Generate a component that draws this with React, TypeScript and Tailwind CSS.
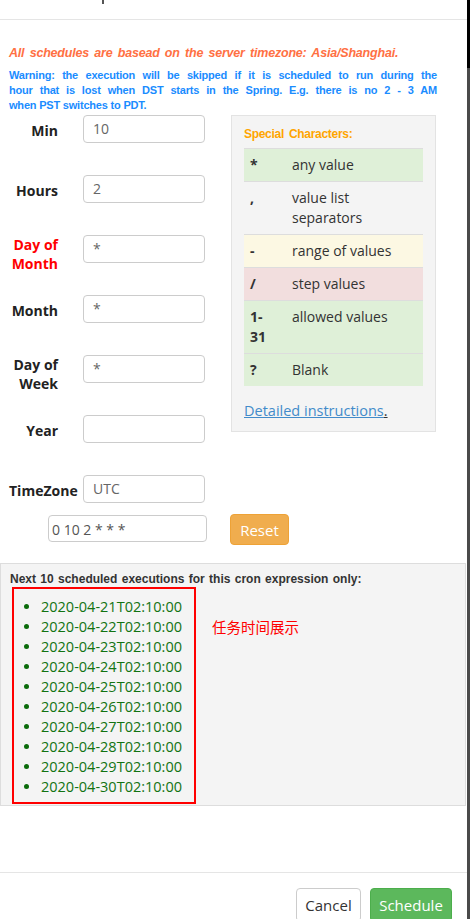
import React from 'react';

const fields = [
  { label: ['Min'], value: '10', red: false },
  { label: ['Hours'], value: '2', red: false },
  { label: ['Day of', 'Month'], value: '*', red: true },
  { label: ['Month'], value: '*', red: false },
  { label: ['Day of', 'Week'], value: '*', red: false },
  { label: ['Year'], value: '', red: false },
];

const specials = [
  { ch: '*', desc: 'any value', bg: 'bg-[#dff0d8]' },
  { ch: ',', desc: 'value list separators', bg: 'bg-transparent' },
  { ch: '-', desc: 'range of values', bg: 'bg-[#fcf8e3]' },
  { ch: '/', desc: 'step values', bg: 'bg-[#f2dede]' },
  { ch: '1-31', desc: 'allowed values', bg: 'bg-[#dff0d8]' },
  { ch: '?', desc: 'Blank', bg: 'bg-[#dff0d8]' },
];

const runs = [
  '2020-04-21T02:10:00',
  '2020-04-22T02:10:00',
  '2020-04-23T02:10:00',
  '2020-04-24T02:10:00',
  '2020-04-25T02:10:00',
  '2020-04-26T02:10:00',
  '2020-04-27T02:10:00',
  '2020-04-28T02:10:00',
  '2020-04-29T02:10:00',
  '2020-04-30T02:10:00',
];

const warning = [
  'Warning: the execution will be skipped if it is scheduled to run during the',
  'hour that is lost when DST starts in the Spring. E.g. there is no 2 - 3 AM',
];

const narrow = "font-['Liberation_Sans',Arial,sans-serif]";

export default function App() {
  return (
    <div className="flex w-[470px] h-[919px] overflow-hidden bg-white font-['Open_Sans','Noto_Sans_CJK_SC',sans-serif] text-[#333]">
      <div className="flex-1 flex flex-col min-w-0 overflow-hidden">
        {/* clipped modal header */}
        <div className="shrink-0 h-[20px] border-b border-[#e5e5e5] pl-[102px]">
          <div className="w-[2px] h-[4px] bg-[#555]" />
        </div>

        <div className="shrink-0 px-[9px] pt-[25px]">
          <p className={`${narrow} font-bold italic text-[12.5px] leading-[16px] text-[#ff7043] tracking-[-0.2px] [word-spacing:2px] whitespace-nowrap`}>
            All schedules are basead on the server timezone: Asia/Shanghai.
          </p>
          <div className={`${narrow} mt-[7px] font-bold text-[11px] leading-[15px] text-[#1a8cff] pr-[21px] tracking-[-0.2px]`}>
            {warning.map((line) => (
              <div key={line} className="text-justify [text-align-last:justify] whitespace-nowrap">
                {line}
              </div>
            ))}
            <div>when PST switches to PDT.</div>
          </div>
        </div>

        <div className="shrink-0 flex pt-[2px]">
          {/* form */}
          <div className="w-[231px] shrink-0">
            {fields.map((f) => (
              <div key={f.label.join(' ')} className="flex h-[60px]">
                <div
                  className={`w-[58px] text-right font-bold text-[14px] leading-[19px] ${
                    f.label.length > 1 ? 'pt-[0px]' : 'pt-[6px]'
                  } ${f.red ? 'text-[#ff0000]' : 'text-[#222]'}`}
                >
                  {f.label.map((l) => (
                    <div key={l}>{l}</div>
                  ))}
                </div>
                <div className="ml-[25px] w-[122px] h-[28px] border border-[#ccc] rounded-[4px] px-[9px] text-[14px] leading-[26px] text-[#666]">
                  {f.value}
                </div>
              </div>
            ))}
            <div className="flex h-[40px]">
              <div className="pl-[9px] w-[83px] font-bold text-[14px] leading-[19px] pt-[6px] text-[#222]">TimeZone</div>
              <div className="w-[122px] h-[28px] border border-[#ccc] rounded-[4px] px-[9px] text-[14px] leading-[26px] text-[#666]">
                UTC
              </div>
            </div>
          </div>

          {/* special characters panel */}
          <div className="w-[205px] h-[317px] bg-[#f4f4f4] border border-[#e3e3e3] px-[12px]">
            <div className={`${narrow} font-bold text-[12px] leading-[16px] text-[#ffa500] pt-[10px] pb-[6px] tracking-[-0.3px] [word-spacing:2px]`}>
              Special Characters:
            </div>
            <div className="text-[14px] leading-[20px] text-[#333]">
              {specials.map((s) => (
                <div key={s.ch} className={`flex border-t border-[#ddd] ${s.bg} py-[6px]`}>
                  <div className="w-[48px] pl-[6px] pr-[14px] font-bold">{s.ch}</div>
                  <div className="flex-1 pr-[6px]">{s.desc}</div>
                </div>
              ))}
            </div>
            <div className="mt-[15px] text-[14.5px] leading-[20px]">
              <span className="text-[#428bca] underline">Detailed instructions</span>
              <span className="underline">.</span>
            </div>
          </div>
        </div>

        {/* expression + reset */}
        <div className="shrink-0 flex items-start pl-[48px]">
          <div className="w-[159px] h-[27px] border border-[#ccc] rounded-[4px] pl-[3px] text-[14px] leading-[27px] text-[#555]">
            0 10 2 * * *
          </div>
          <button className="ml-[23px] -mt-[1px] w-[59px] h-[31px] rounded-[4px] bg-[#f0ad4e] border border-[#eea236] text-white text-[15px] leading-[20px]">
            Reset
          </button>
        </div>

        {/* next executions */}
        <div className="shrink-0 mt-[18px] mr-[1px] h-[243px] bg-[#f4f4f4] border border-[#ddd] pl-[9px]">
          <div className={`${narrow} font-bold text-[12px] leading-[14px] pt-[8px] text-[#333] [word-spacing:1px]`}>
            Next 10 scheduled executions for this cron expression only:
          </div>
          <div className="flex items-start">
            <div className="ml-[2px] mt-[1px] w-[184px] h-[217px] border-2 border-[#ff0000] pt-[8px]">
              <ul className="list-disc pl-[27px] marker:text-[#0a6b0a] text-[14.5px] leading-[20px] text-[#127312]">
                {runs.map((r) => (
                  <li key={r}>{r}</li>
                ))}
              </ul>
            </div>
            <div className="ml-[16px] mt-[31px] text-[14.5px] leading-[20px] text-[#ff0000] font-['Noto_Sans_CJK_SC',sans-serif]">
              任务时间展示
            </div>
          </div>
        </div>

        {/* footer */}
        <div className="shrink-0 mt-[66px] border-t border-[#e5e5e5] flex justify-end gap-[9px] pr-[15px] pt-[15px]">
          <button className="w-[65px] h-[34px] border border-[#ccc] rounded-[4px] bg-white text-[15px] text-[#333]">
            Cancel
          </button>
          <button className="w-[82px] h-[34px] border border-[#4cae4c] rounded-[4px] bg-[#5cb85c] text-[15px] text-white">
            Schedule
          </button>
        </div>
      </div>

      {/* right edge strip */}
      <div className="w-[3px] flex flex-col">
        <div className="h-[68px] bg-black" />
        <div className="flex-1 bg-[#4a4a4a]" />
      </div>
    </div>
  );
}
